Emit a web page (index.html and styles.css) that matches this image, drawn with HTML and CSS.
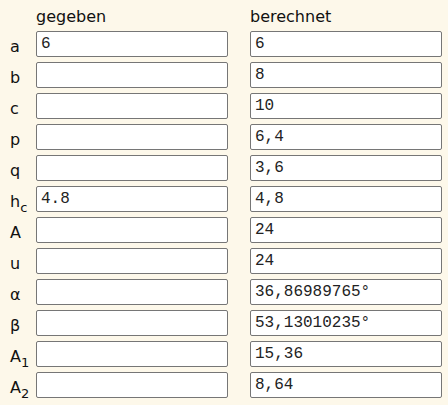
FILE: index.html
```html
<!DOCTYPE html>
<html>
<head>
<meta charset="utf-8">
<link rel="stylesheet" href="styles.css">
</head>
<body>
<div class="table">
  <div class="row head">
    <span class="label"></span>
    <span class="colhead">gegeben</span>
    <span class="colhead second">berechnet</span>
  </div>
  <div class="row"><span class="label">a</span><input class="field" value="6"><input class="field second" value="6"></div>
  <div class="row"><span class="label">b</span><input class="field" value=""><input class="field second" value="8"></div>
  <div class="row"><span class="label">c</span><input class="field" value=""><input class="field second" value="10"></div>
  <div class="row"><span class="label">p</span><input class="field" value=""><input class="field second" value="6,4"></div>
  <div class="row"><span class="label">q</span><input class="field" value=""><input class="field second" value="3,6"></div>
  <div class="row"><span class="label">h<sub>c</sub></span><input class="field" value="4.8"><input class="field second" value="4,8"></div>
  <div class="row"><span class="label">A</span><input class="field" value=""><input class="field second" value="24"></div>
  <div class="row"><span class="label">u</span><input class="field" value=""><input class="field second" value="24"></div>
  <div class="row"><span class="label">α</span><input class="field" value=""><input class="field second" value="36,86989765°"></div>
  <div class="row"><span class="label">β</span><input class="field" value=""><input class="field second" value="53,13010235°"></div>
  <div class="row"><span class="label">A<sub>1</sub></span><input class="field" value=""><input class="field second" value="15,36"></div>
  <div class="row"><span class="label">A<sub>2</sub></span><input class="field" value=""><input class="field second" value="8,64"></div>
</div>
</body>
</html>
```
FILE: styles.css
```css
html, body {
  margin: 0;
  padding: 0;
  background: #fdf8ea;
}
body {
  font-family: "DejaVu Sans", Verdana, sans-serif;
  font-size: 16px;
  color: #111;
}
.table {
  display: flex;
  flex-direction: column;
  gap: 5px;
  padding-top: 6px;
}
.row {
  display: flex;
  align-items: center;
  height: 26px;
}
.row.head {
  height: 20px;
  align-items: flex-end;
}
.label {
  width: 36px;
  box-sizing: border-box;
  padding-left: 10px;
  padding-top: 4px;
  line-height: 19px;
}
.label sub {
  font-size: 13px;
  vertical-align: -5px;
  line-height: 0;
}
.colhead {
  width: 192px;
  line-height: 19px;
}
.second {
  margin-left: 22px;
}
.field {
  width: 192px;
  height: 26px;
  box-sizing: border-box;
  border: 1px solid #767676;
  border-radius: 2px;
  background: #fff;
  padding: 0 4px;
  margin-top: 0;
  margin-bottom: 0;
  font-family: "Liberation Mono", "Courier New", monospace;
  font-size: 16px;
  color: #222;
  outline: none;
}
.field:not(.second) {
  margin-left: 0;
}
```
